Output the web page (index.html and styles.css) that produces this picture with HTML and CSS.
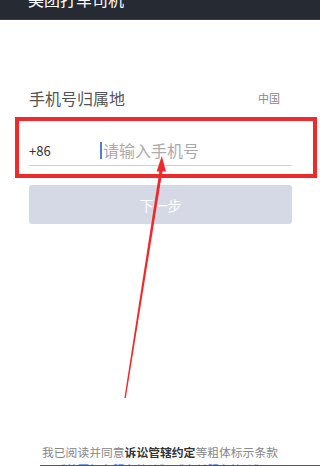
FILE: index.html
```html
<!DOCTYPE html>
<html lang="zh-CN">
<head>
    <meta charset="UTF-8">
    <meta name="viewport" content="width=device-width, initial-scale=1.0">
    <title>美团打车司机</title>
    <link rel="stylesheet" href="styles.css">
</head>
<body>
    <div class="page">
        <div class="top-bar">
            <div class="top-title">美团打车司机</div>
        </div>
        <div class="form">
            <div class="region-row">
                <span class="region-label">手机号归属地</span>
                <span class="region-value">中国</span>
            </div>
            <div class="phone-row">
                <span class="phone-prefix">+86</span>
                <span class="cursor"></span>
                <span class="phone-placeholder">请输入手机号</span>
            </div>
            <button class="next-button">下一步</button>
        </div>
        <div class="agreement">
            <p>我已阅读并同意<b>诉讼管辖约定</b>等粗体标示条款</p>
            <p class="links">《美团打车服务协议》、《支付服务协议》</p>
        </div>
        <div class="bottom-line"></div>

        <!-- annotation drawn over the screenshot -->
        <div class="mark-box"></div>
        <svg class="mark-arrow" width="320" height="466" viewBox="0 0 320 466">
            <polygon points="124.4,398 125.8,398 162.6,170 159.6,170" fill="#ee2a2a"/>
            <polygon points="161.8,156 156.6,171.5 166,171.5" fill="#ee2a2a"/>
        </svg>
    </div>
</body>
</html>
```

FILE: styles.css
```css
body {
    margin: 0;
    font-family: "Noto Sans CJK SC", "Noto Sans", sans-serif;
    background-color: #fff;
}

.page {
    position: relative;
    width: 320px;
    height: 466px;
    overflow: hidden;
}

.top-bar {
    height: 19px;
    background-color: #262a33;
    border-bottom: 1px solid #3a3e46;
    padding-left: 28px;
    overflow: hidden;
}

.top-title {
    color: #fff;
    font-size: 16px;
    line-height: 16px;
    margin-top: -9px;
}

.form {
    padding: 0 28px 0 29px;
}

.region-row {
    display: flex;
    justify-content: space-between;
    align-items: center;
    height: 20px;
    margin-top: 68px;
    padding-right: 12px;
}

.region-label {
    font-size: 16px;
    color: #555;
}

.region-value {
    font-size: 11px;
    color: #888;
}

.phone-row {
    display: flex;
    align-items: center;
    height: 30px;
    margin-top: 27px;
    border-bottom: 1px solid #d2d2d2;
}

.phone-prefix {
    width: 71px;
    font-size: 13px;
    color: #333;
}

.cursor {
    width: 2px;
    height: 17px;
    background-color: #4a7fe0;
    margin-right: 1px;
}

.phone-placeholder {
    font-size: 16px;
    color: #aaa;
}

.next-button {
    display: block;
    width: 100%;
    height: 39px;
    margin-top: 19px;
    background-color: #d5d9e5;
    color: #fff;
    border: none;
    border-radius: 3px;
    font-family: inherit;
    font-size: 14px;
}

.agreement {
    margin-top: 219px;
    text-align: center;
    font-size: 11.8px;
    line-height: 17px;
    color: #888;
}

.agreement p {
    margin: 0;
    white-space: nowrap;
}

.agreement b {
    color: #333;
}

.agreement .links {
    color: #5b8fd6;
}

.bottom-line {
    position: absolute;
    left: 40px;
    right: 0;
    bottom: 0;
    height: 1px;
    background-color: #555;
}

.mark-box {
    position: absolute;
    left: 15px;
    top: 117px;
    width: 294px;
    height: 53px;
    border: 4px solid #ee2a2a;
}

.mark-arrow {
    position: absolute;
    left: 0;
    top: 0;
}
```
